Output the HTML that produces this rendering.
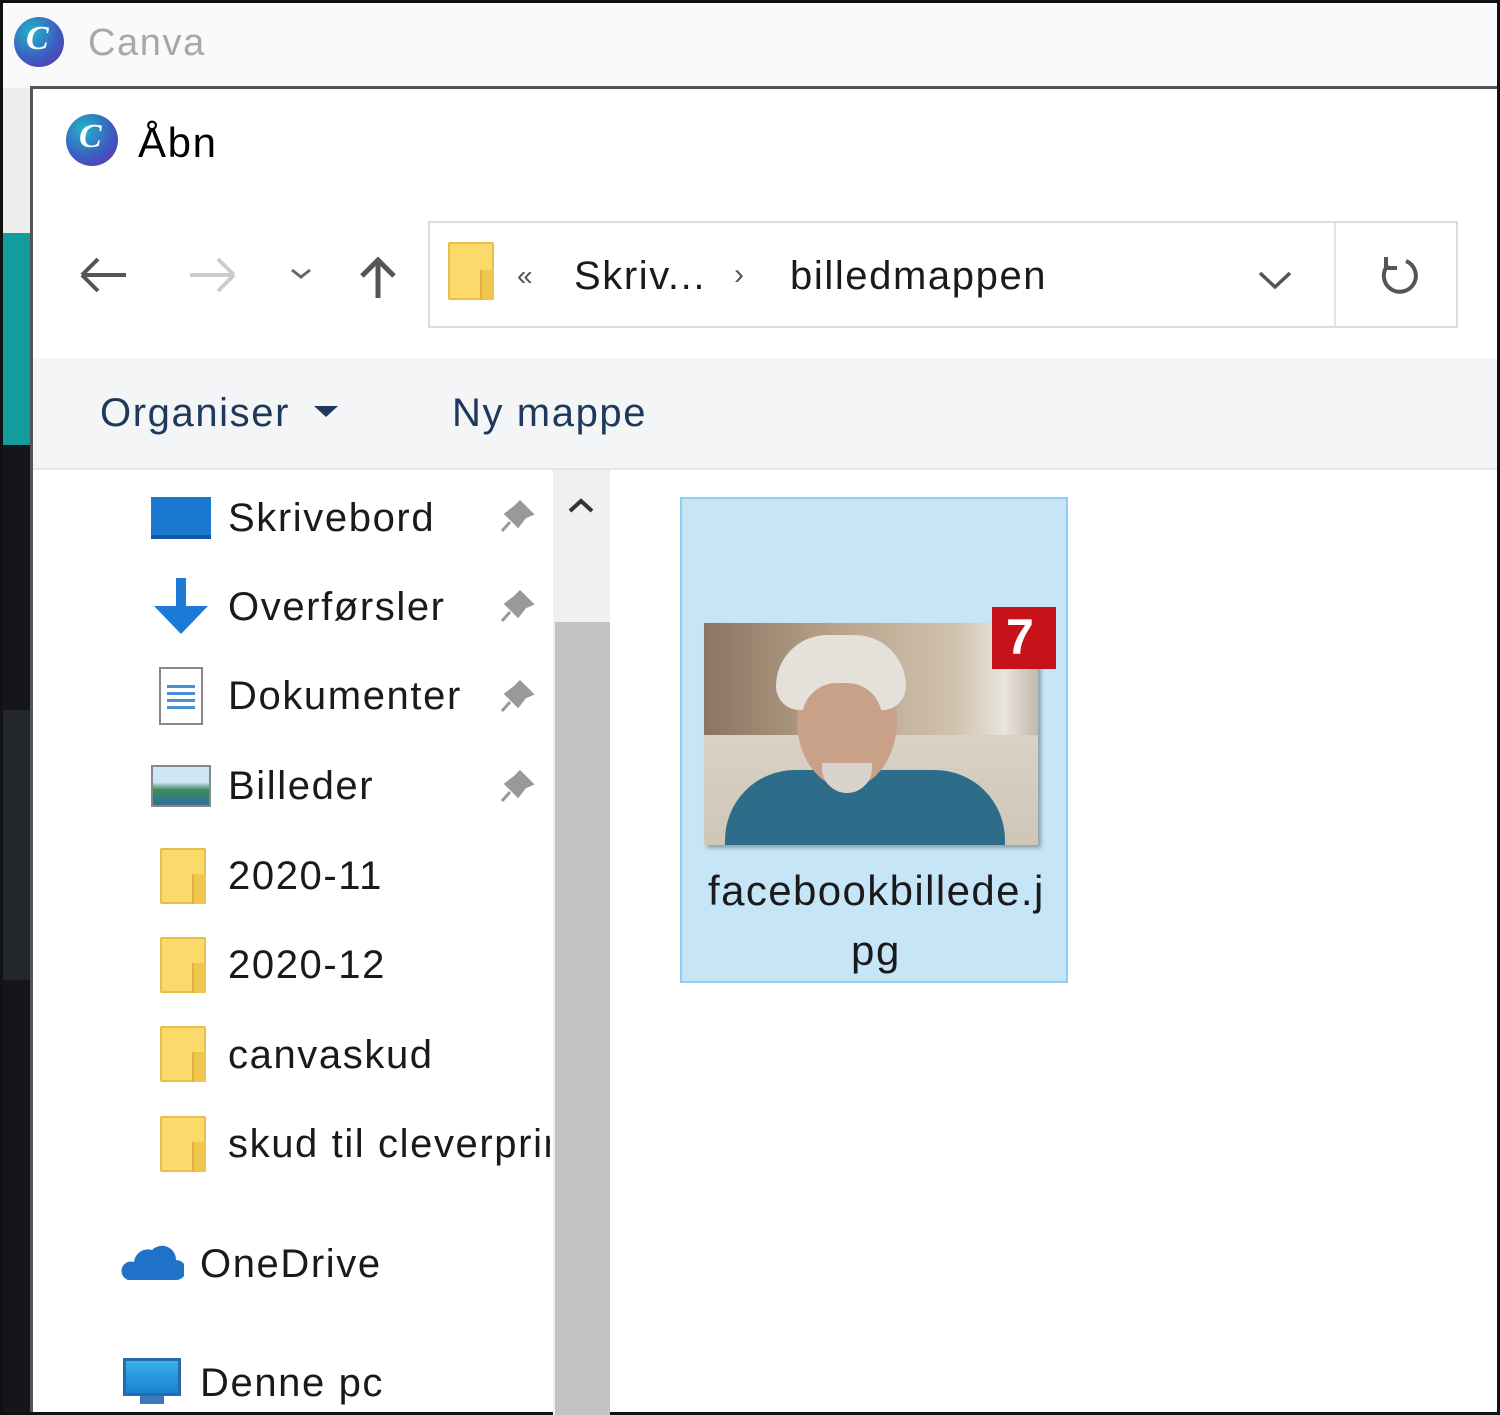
<!DOCTYPE html>
<html><head><meta charset="utf-8"><style>
*{margin:0;padding:0;box-sizing:border-box}
body{width:1500px;height:1415px;position:relative;overflow:hidden;background:#fff;font-family:"Liberation Sans","DejaVu Sans",sans-serif;}
.a{position:absolute}
.t{position:absolute;font-size:40px;color:#1a1a1a;white-space:nowrap;line-height:1;letter-spacing:1.6px}
.fold{position:absolute;width:46px;height:56px;background:#fbd96a;border:2px solid #e8bf48;border-radius:2px}
.fold:after{content:"";position:absolute;right:-2px;bottom:-2px;width:12px;height:30px;background:#f1c64f;border-left:2px solid #e0b23c}
</style></head><body>
<div class="a" style="left:0;top:0;width:1500px;height:1415px;border:3px solid #111"></div>
<div class="a" style="left:3px;top:3px;width:1494px;height:85px;background:#fafafa"></div>
<div class="a" style="left:14px;top:17px;width:50px;height:50px;border-radius:50%;background:radial-gradient(circle at 35% 30%,#23b5c8,#3a5ec0 55%,#6a2aa8)"></div>
<div class="a" style="left:26px;top:20px;font:italic bold 34px 'Liberation Serif',serif;color:#fff">C</div>
<div class="t" style="left:88px;top:24px;color:#a8a8a8;font-size:38px">Canva</div>
<div class="a" style="left:3px;top:88px;width:27px;height:145px;background:#eee"></div>
<div class="a" style="left:3px;top:233px;width:27px;height:212px;background:#139c9c"></div>
<div class="a" style="left:3px;top:445px;width:27px;height:967px;background:#141619"></div>
<div class="a" style="left:3px;top:710px;width:27px;height:270px;background:#23272c"></div>
<div class="a" style="left:30px;top:86px;width:1467px;height:1326px;background:#fff;border-top:3px solid #555;border-left:3px solid #555"></div>
<div class="a" style="left:66px;top:114px;width:52px;height:52px;border-radius:50%;background:radial-gradient(circle at 35% 30%,#23b5c8,#3a5ec0 55%,#6a2aa8)"></div>
<div class="a" style="left:79px;top:118px;font:italic bold 34px 'Liberation Serif',serif;color:#fff">C</div>
<div class="t" style="left:138px;top:122px;font-size:42px;color:#000">Åbn</div>
<svg class="a" style="left:78px;top:250px" width="330" height="55" viewBox="0 0 330 55">
<path d="M4 25H48M4 25L20 9M4 25L20 41" stroke="#555" stroke-width="4" fill="none"/>
<path d="M112 25H156M156 25L140 9M156 25L140 41" stroke="#ccc" stroke-width="4" fill="none"/>
<path d="M214 20L223 27L232 20" stroke="#666" stroke-width="3" fill="none"/>
<path d="M300 48V10M284 26L300 10L316 26" stroke="#555" stroke-width="5" fill="none"/>
</svg>
<div class="a" style="left:428px;top:221px;width:1030px;height:107px;border:2px solid #dcdcdc"></div>
<div class="a" style="left:1334px;top:223px;width:2px;height:103px;background:#e3e3e3"></div>
<div class="fold" style="left:448px;top:242px;height:58px"></div>
<div class="t" style="left:517px;top:262px;font-size:28px;color:#555">«</div>
<div class="t" style="left:574px;top:256px">Skriv...</div>
<div class="t" style="left:734px;top:260px;font-size:30px;color:#555">›</div>
<div class="t" style="left:790px;top:256px">billedmappen</div>
<svg class="a" style="left:1256px;top:265px" width="40" height="30"><path d="M4 8L19 22L34 8" stroke="#555" stroke-width="3.5" fill="none"/></svg>
<svg class="a" style="left:1376px;top:253px" width="46" height="46"><path d="M30 8A16 16 0 1 1 12 12" stroke="#555" stroke-width="4" fill="none"/><path d="M10 4V15H21" stroke="#555" stroke-width="4" fill="none"/></svg>
<div class="a" style="left:33px;top:358px;width:1464px;height:112px;background:#f4f5f6"></div>
<div class="a" style="left:33px;top:468px;width:1464px;height:2px;background:#e6e6e6"></div>
<div class="t" style="left:100px;top:393px;color:#1e395b">Organiser</div>
<svg class="a" style="left:312px;top:403px" width="28" height="16"><path d="M2 3H26L14 14Z" fill="#1e395b"/></svg>
<div class="t" style="left:452px;top:393px;color:#1e395b">Ny mappe</div>
<div class="a" style="left:553px;top:470px;width:57px;height:945px;background:#f0f0f0"></div>
<div class="a" style="left:555px;top:622px;width:55px;height:793px;background:#c3c3c3"></div>
<svg class="a" style="left:566px;top:496px" width="30" height="20"><path d="M4 15L15 5L26 15" stroke="#333" stroke-width="4" fill="none"/></svg>
<div class="a" style="left:151px;top:497px;width:60px;height:42px;background:#1a78d0;border-bottom:4px solid #0f5aa8"></div>
<div class="t" style="left:228px;top:498px">Skrivebord</div>
<svg class="a" style="left:150px;top:576px" width="62" height="62"><path d="M31 2V40" stroke="#1a7ad6" stroke-width="10"/><path d="M4 30L31 58L58 30Z" fill="#1a7ad6"/></svg>
<div class="t" style="left:228px;top:587px">Overførsler</div>
<div class="a" style="left:159px;top:667px;width:44px;height:58px;background:#fff;border:2px solid #888"></div>
<div class="a" style="left:167px;top:685px;width:28px;height:24px;background:repeating-linear-gradient(#4a8fd6 0 3px,transparent 3px 7px)"></div>
<div class="t" style="left:228px;top:676px">Dokumenter</div>
<div class="a" style="left:151px;top:765px;width:60px;height:42px;border:2px solid #888;background:linear-gradient(#cfe6f5 40%,#3d8a5e 60%,#2d6f9a)"></div>
<div class="t" style="left:228px;top:766px">Billeder</div>
<svg class="a" style="left:498px;top:498px" width="40" height="310">
<g fill="#999"><path d="M22 4L34 16L27 19L20 28L8 16L17 9Z M12 24L4 33" stroke="#999" stroke-width="3"/>
<path transform="translate(0,90)" d="M22 4L34 16L27 19L20 28L8 16L17 9Z M12 24L4 33" stroke="#999" stroke-width="3"/>
<path transform="translate(0,180)" d="M22 4L34 16L27 19L20 28L8 16L17 9Z M12 24L4 33" stroke="#999" stroke-width="3"/>
<path transform="translate(0,270)" d="M22 4L34 16L27 19L20 28L8 16L17 9Z M12 24L4 33" stroke="#999" stroke-width="3"/></g></svg>
<div class="fold" style="left:160px;top:848px"></div>
<div class="t" style="left:228px;top:856px">2020-11</div>
<div class="fold" style="left:160px;top:937px"></div>
<div class="t" style="left:228px;top:945px">2020-12</div>
<div class="fold" style="left:160px;top:1026px"></div>
<div class="t" style="left:228px;top:1035px">canvaskud</div>
<div class="fold" style="left:160px;top:1116px"></div>
<div class="a" style="left:228px;top:1120px;width:322px;height:50px;overflow:hidden"><div class="t" style="left:0;top:4px">skud til cleverprint</div></div>
<svg class="a" style="left:120px;top:1238px" width="64" height="46"><path d="M8 42H56A10 10 0 0 0 56 22A14 14 0 0 0 32 12A14 14 0 0 0 14 24A9 9 0 0 0 8 42Z" fill="#1f72c8"/></svg>
<div class="t" style="left:200px;top:1244px">OneDrive</div>
<div class="a" style="left:123px;top:1358px;width:58px;height:38px;background:linear-gradient(#3ab0ee,#1a82d0);border:3px solid #2a6aa8"></div>
<div class="a" style="left:140px;top:1396px;width:24px;height:8px;background:#3a7ab8"></div>
<div class="t" style="left:200px;top:1363px">Denne pc</div>
<div class="a" style="left:680px;top:497px;width:388px;height:486px;background:#c6e5f7;border:2px solid #8fcdf2"></div>
<div class="a" style="left:704px;top:623px;width:334px;height:222px;box-shadow:3px 3px 4px rgba(0,0,0,.3);background:linear-gradient(90deg,#8a7562,#b9a38a 40%,#d0c2ae 75%,#e8e4dc 90%,#c4b8a8);overflow:hidden">
<div class="a" style="left:0;top:112px;width:334px;height:110px;background:linear-gradient(#d8d2c6,#cfc6b6)"></div>
<div class="a" style="left:21px;top:147px;width:280px;height:90px;border-radius:70px 70px 0 0;background:#2e6d8a"></div>
<div class="a" style="left:93px;top:30px;width:100px;height:135px;border-radius:50%;background:#c9a088"></div>
<div class="a" style="left:118px;top:140px;width:50px;height:30px;border-radius:0 0 25px 25px;background:#d8d4cc"></div>
<div class="a" style="left:72px;top:12px;width:130px;height:75px;border-radius:65px 65px 30px 30px;background:#e4e0da"></div>
<div class="a" style="left:98px;top:60px;width:80px;height:60px;border-radius:35px 35px 0 0;background:#c9a088"></div>
</div>
<div class="a" style="left:992px;top:607px;width:64px;height:62px;background:#c8121a"></div>
<div class="t" style="left:1006px;top:612px;font-size:50px;font-weight:bold;color:#fff">7</div>
<div class="t" style="left:708px;top:870px;font-size:42px;letter-spacing:1.4px">facebookbillede.j</div>
<div class="t" style="left:851px;top:930px;font-size:42px">pg</div>
</body></html>
